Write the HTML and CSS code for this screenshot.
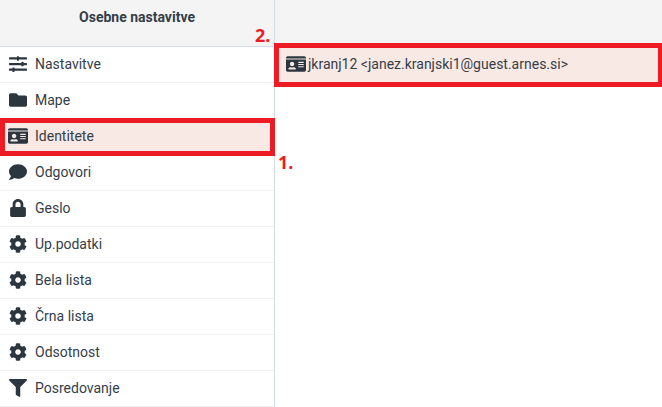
FILE: index.html
```html
<!DOCTYPE html>
<html lang="sl">
<head>
<meta charset="utf-8">
<title>Osebne nastavitve</title>
<link rel="stylesheet" href="styles.css">
</head>
<body>
<svg class="defs" width="0" height="0">
  <symbol id="i-sliders" viewBox="0 0 512 512"><path d="M496 384H160v-16c0-8.800-7.200-16-16-16h-32c-8.800 0-16 7.200-16 16v16H16c-8.800 0-16 7.200-16 16v32c0 8.800 7.200 16 16 16h80v16c0 8.800 7.200 16 16 16h32c8.800 0 16-7.200 16-16v-16h336c8.800 0 16-7.200 16-16v-32c0-8.800-7.200-16-16-16zm0-160h-80v-16c0-8.800-7.200-16-16-16h-32c-8.800 0-16 7.200-16 16v16H16c-8.800 0-16 7.200-16 16v32c0 8.800 7.200 16 16 16h336v16c0 8.800 7.200 16 16 16h32c8.800 0 16-7.200 16-16v-16h80c8.800 0 16-7.200 16-16v-32c0-8.800-7.200-16-16-16zm0-160H288V48c0-8.800-7.200-16-16-16h-32c-8.800 0-16 7.200-16 16v16H16C7.200 64 0 71.200 0 80v32c0 8.800 7.200 16 16 16h208v16c0 8.800 7.200 16 16 16h32c8.800 0 16-7.200 16-16v-16h208c8.800 0 16-7.200 16-16V80c0-8.800-7.200-16-16-16z"/></symbol>
  <symbol id="i-folder" viewBox="0 0 512 512"><path d="M464 128H272l-64-64H48C21.490 64 0 85.490 0 112v288c0 26.510 21.490 48 48 48h416c26.510 0 48-21.510 48-48V176c0-26.510-21.490-48-48-48z"/></symbol>
  <symbol id="i-id" viewBox="0 0 576 512"><path d="M528 32H48C21.500 32 0 53.500 0 80v16h576V80c0-26.500-21.500-48-48-48zM0 432c0 26.500 21.500 48 48 48h480c26.500 0 48-21.500 48-48V128H0v304zm352-232c0-4.400 3.600-8 8-8h144c4.400 0 8 3.600 8 8v16c0 4.400-3.600 8-8 8H360c-4.400 0-8-3.600-8-8v-16zm0 64c0-4.400 3.600-8 8-8h144c4.400 0 8 3.600 8 8v16c0 4.400-3.600 8-8 8H360c-4.400 0-8-3.600-8-8v-16zm0 64c0-4.400 3.600-8 8-8h144c4.400 0 8 3.600 8 8v16c0 4.400-3.600 8-8 8H360c-4.400 0-8-3.600-8-8v-16zM176 192c35.300 0 64 28.700 64 64s-28.700 64-64 64-64-28.700-64-64 28.700-64 64-64zM67.100 396.200C75.500 370.500 99.600 352 128 352h8.200c12.300 5.100 25.700 8 39.800 8s27.600-2.900 39.800-8h8.200c28.400 0 52.500 18.500 60.900 44.200 3.200 9.900-5.200 19.800-15.600 19.800H82.700c-10.400 0-18.800-10-15.600-19.800z"/></symbol>
  <symbol id="i-comment" viewBox="0 0 512 512"><path d="M256 32C114.600 32 0 125.100 0 240c0 49.600 21.400 95 57 130.700C44.500 421.100 2.700 466 2.200 466.500c-2.200 2.300-2.800 5.700-1.500 8.700S4.800 480 8 480c66.300 0 116-31.800 140.600-51.400 32.700 12.300 69 19.400 107.400 19.400 141.400 0 256-93.100 256-208S397.400 32 256 32z"/></symbol>
  <symbol id="i-lock" viewBox="0 0 448 512"><path d="M400 224h-24v-72C376 68.200 307.800 0 224 0S72 68.200 72 152v72H48c-26.500 0-48 21.500-48 48v192c0 26.500 21.500 48 48 48h352c26.500 0 48-21.500 48-48V272c0-26.500-21.500-48-48-48zm-104 0H152v-72c0-39.700 32.300-72 72-72s72 32.300 72 72v72z"/></symbol>
  <symbol id="i-cog" viewBox="0 0 512 512"><path d="M487.400 315.700l-42.600-24.600c4.300-23.200 4.300-47 0-70.200l42.600-24.600c4.900-2.800 7.100-8.600 5.500-14-11.100-35.600-30-67.800-54.700-94.600-3.800-4.100-10-5.100-14.800-2.300L380.800 110c-17.900-15.400-38.500-27.300-60.800-35.100V25.800c0-5.600-3.900-10.500-9.400-11.700-36.700-8.200-74.300-7.800-109.200 0-5.500 1.200-9.400 6.100-9.400 11.700V75c-22.200 7.900-42.800 19.800-60.800 35.100L88.700 85.500c-4.900-2.800-11-1.900-14.800 2.300-24.700 26.700-43.600 58.900-54.700 94.600-1.700 5.400.6 11.200 5.500 14L67.300 221c-4.300 23.200-4.300 47 0 70.200l-42.600 24.600c-4.900 2.800-7.100 8.600-5.500 14 11.100 35.600 30 67.800 54.700 94.600 3.800 4.100 10 5.100 14.800 2.300l42.600-24.600c17.900 15.400 38.500 27.300 60.800 35.100v49.200c0 5.600 3.900 10.500 9.400 11.700 36.700 8.200 74.300 7.800 109.200 0 5.500-1.200 9.400-6.100 9.400-11.700v-49.200c22.200-7.900 42.800-19.800 60.800-35.100l42.600 24.600c4.900 2.800 11 1.900 14.800-2.300 24.700-26.700 43.600-58.900 54.700-94.600 1.500-5.500-.7-11.300-5.600-14.100zM256 336c-44.100 0-80-35.900-80-80s35.900-80 80-80 80 35.900 80 80-35.900 80-80 80z"/></symbol>
  <symbol id="i-filter" viewBox="0 0 512 512"><path d="M487.976 0H24.028C2.710 0-8.047 25.866 7.058 40.971L192 225.941V432c0 7.831 3.821 15.170 10.237 19.662l80 55.980C298.020 518.690 320 507.493 320 487.980V225.941l184.947-184.970C520.021 25.896 509.338 0 487.976 0z"/></symbol>
</svg>

<div class="app">
  <aside class="sidebar">
    <header class="head"><h1 class="title">Osebne nastavitve</h1></header>
    <nav class="menu">
      <a class="item"><span class="ico"><svg class="svg"><use href="#i-sliders"/></svg></span>Nastavitve</a>
      <a class="item"><span class="ico"><svg class="svg"><use href="#i-folder"/></svg></span>Mape</a>
      <a class="item selected"><span class="ico"><svg class="svg"><use href="#i-id"/></svg></span>Identitete</a>
      <a class="item"><span class="ico"><svg class="svg"><use href="#i-comment"/></svg></span>Odgovori</a>
      <a class="item"><span class="ico"><svg class="svg"><use href="#i-lock"/></svg></span>Geslo</a>
      <a class="item"><span class="ico"><svg class="svg"><use href="#i-cog"/></svg></span>Up.podatki</a>
      <a class="item"><span class="ico"><svg class="svg"><use href="#i-cog"/></svg></span>Bela lista</a>
      <a class="item"><span class="ico"><svg class="svg"><use href="#i-cog"/></svg></span>Črna lista</a>
      <a class="item"><span class="ico"><svg class="svg"><use href="#i-cog"/></svg></span>Odsotnost</a>
      <a class="item"><span class="ico"><svg class="svg"><use href="#i-filter"/></svg></span>Posredovanje</a>
    </nav>
  </aside>
  <main class="content">
    <header class="head"></header>
    <div class="identity selected"><span class="ico-inline"><svg class="svg"><use href="#i-id"/></svg></span>jkranj12 &lt;janez.kranjski1@guest.arnes.si&gt;</div>
  </main>
  <div class="mark mark-one"></div>
  <div class="mark mark-two"></div>
  <span class="note note-one">1.</span>
  <span class="note note-two">2.</span>
</div>
</body>
</html>
```
FILE: styles.css
```css
* { box-sizing: border-box; }
html, body { margin: 0; padding: 0; height: 100%; overflow: hidden; background: #fff; }
body { font-family: Roboto, "Liberation Sans", sans-serif; font-size: 14px; color: #343e48; }
.defs { position: absolute; }
.app { position: relative; display: flex; width: 662px; height: 407px; overflow: hidden; }
.sidebar { width: 275px; flex: none; border-right: 1px solid #d4dbe2; }
.content { flex: 1; }
.head { height: 47px; background: #f4f4f4; border-bottom: 1px solid #d4dbe2; }
.title { margin: 0; font-size: 14px; line-height: 34px; font-weight: 700; text-align: center; }
.menu { display: flex; flex-direction: column; }
.item { display: flex; align-items: center; height: 36px; padding-bottom: 2px; border-bottom: 1px solid #f0f0f0; color: #343e48; }
.ico { width: 20px; height: 18px; margin: 0 7px 0 8px; flex: none; display: flex; }
.svg { width: 100%; height: 100%; fill: #2c363f; display: block; }
.identity { display: flex; align-items: center; height: 35px; padding-bottom: 1px; padding-left: 11px; }
.ico-inline { width: 20px; height: 18px; margin-right: 2px; flex: none; display: flex; }
.selected { background: #f9e9e5; }
.mark { position: absolute; border: 5px solid #ed1c24; }
.mark-one { left: 0; top: 118px; width: 275px; height: 38px; }
.mark-two { left: 274px; top: 43px; width: 389px; height: 44px; }
.note { position: absolute; font-family: "Open Sans", sans-serif; font-size: 18px; font-weight: 700; color: #ed1c24; line-height: 20px; }
.note-one { left: 278px; top: 152px; }
.note-two { left: 255px; top: 25px; }
```
